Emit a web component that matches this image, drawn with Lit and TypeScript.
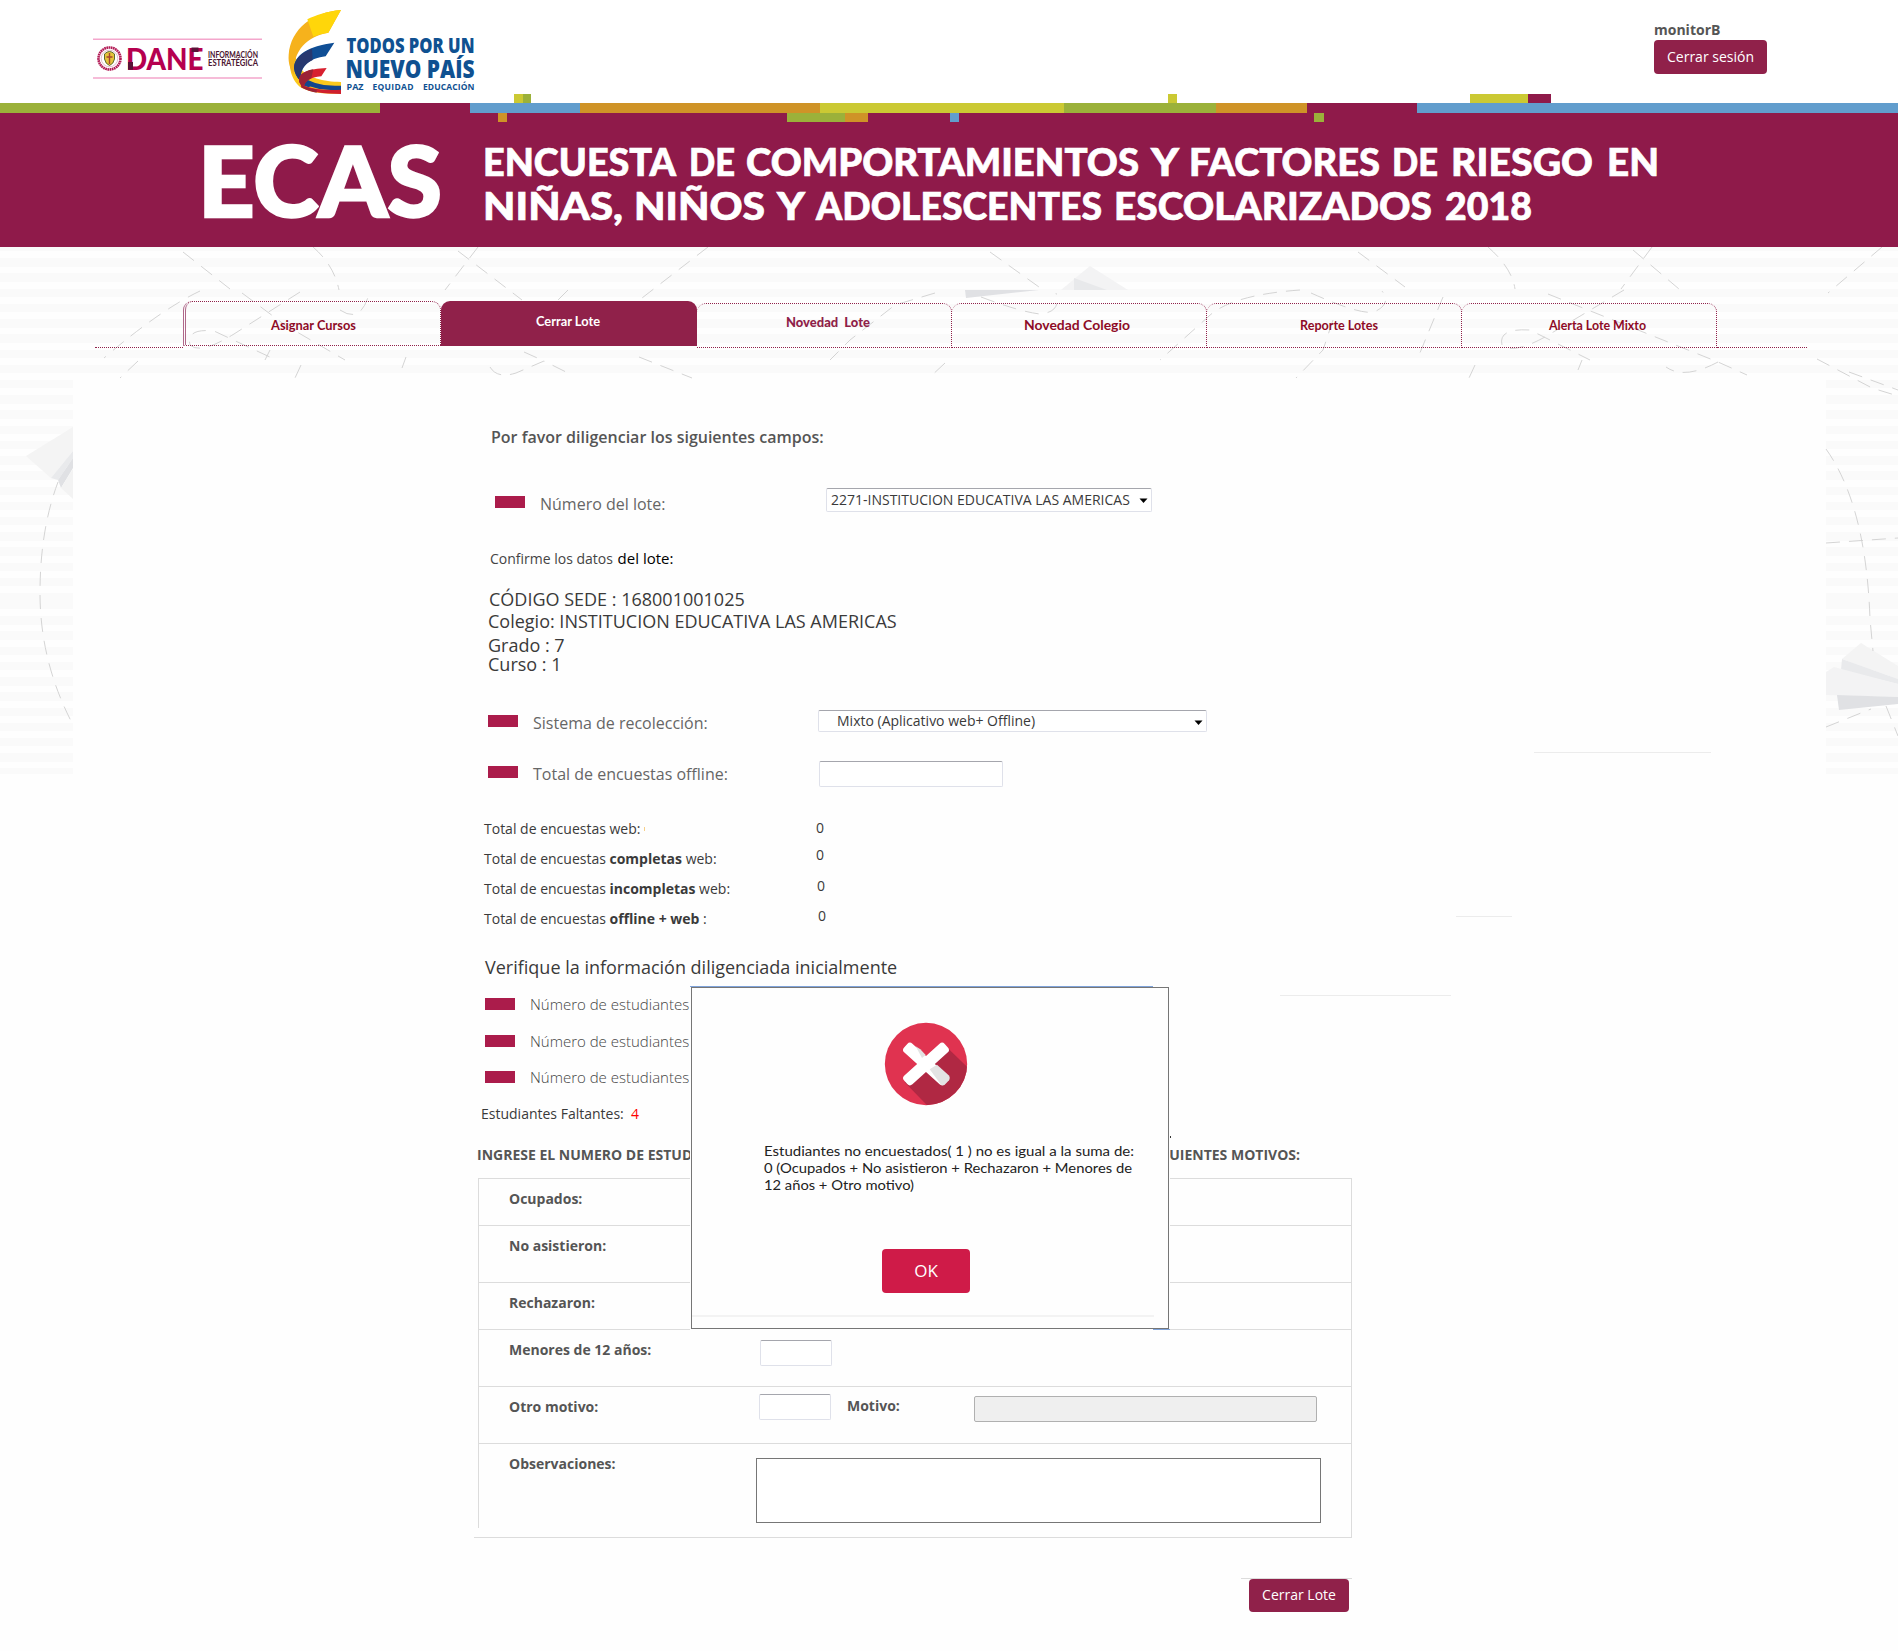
import { LitElement, html, svg, css } from "lit";
import { customElement } from "lit/decorators.js";

/* Colour blocks of the band above the banner: x, y, width, height, fill */
const STRIP: [number, number, number, number, string][] = [
  [0, 9, 380, 10, "#9bb13a"], [380, 9, 90, 10, "#8f1a4a"], [470, 9, 110, 10, "#619dcd"],
  [580, 9, 240, 10, "#cf9327"], [820, 9, 244, 10, "#cbc933"], [1064, 9, 152, 10, "#9bb13a"],
  [1216, 9, 91, 10, "#cf9327"], [1307, 9, 110, 10, "#8f1a4a"], [1417, 9, 481, 10, "#619dcd"],
  [514, 0, 9, 9, "#cbc933"], [523, 0, 8, 9, "#9bb13a"], [1168, 0, 9, 9, "#cbc933"],
  [1470, 0, 58, 9, "#cbc933"], [1528, 0, 23, 9, "#8f1a4a"],
  [498, 19, 9, 9, "#cf9327"], [787, 19, 58, 9, "#9bb13a"], [845, 19, 23, 9, "#cf9327"],
  [950, 19, 9, 9, "#619dcd"], [1314, 19, 10, 9, "#9bb13a"],
];

/* Banner title, one entry per word: left edge, right edge, baseline, word */
const TITLE: [number, number, number, string][] = [
  [486, 675, 175.5, "ENCUESTA"], [692, 734, 175.5, "DE"], [747, 1138, 175.5, "COMPORTAMIENTOS"],
  [1152, 1178, 175.5, "Y"], [1192, 1379, 175.5, "FACTORES"], [1395, 1437, 175.5, "DE"],
  [1454, 1592, 175.5, "RIESGO"], [1610, 1656, 175.5, "EN"],
  [486, 622, 219.5, "NIÑAS,"], [637, 764, 219.5, "NIÑOS"], [778, 804, 219.5, "Y"],
  [817, 1101, 219.5, "ADOLESCENTES"], [1117, 1431, 219.5, "ESCOLARIZADOS"], [1446, 1531, 219.5, "2018"],
];

/* Dashed flight trails of the paper planes */
const TRAILS = [
  "M183 252 L230 289", "M313 247 Q334 265 339 290", "M458 251 L522 300", "M478 247 L445 290",
  "M708 247 L642 298", "M200 291 Q160 310 104 358", "M242 293 L285 325 L345 360",
  "M300 292 L234 334 Q200 355 190 345 Q186 328 214 331 L272 358", "M340 310 Q362 325 370 290",
  "M138 361 L120 378", "M301 365 L295 378", "M270 350 L265 360", "M406 357 L402 368",
  "M490 367 Q497 379 516 373 L544 361 L572 375", "M524 352 L544 361", "M639 357 L692 378",
  "M568 290 L558 300", "M935 293 L895 305 L850 340 L830 360", "M945 363 L929 378",
  "M990 252 L1039 287", "M1358 252 L1405 287", "M1488 247 Q1512 268 1515 289",
  "M1633 250 L1679 289", "M1652 247 L1621 289", "M1882 247 L1828 293",
  "M981 297 Q1021 312 1040 314 Q1062 312 1056 293", "M1311 293 Q1360 315 1374 312 Q1392 304 1382 291",
  "M1300 290 Q1230 295 1208 317 L1160 360", "M1443 297 L1417 360", "M1333 320 L1323 350 L1296 378",
  "M1548 294 L1718 362 L1747 375", "M1624 290 L1545 337 Q1512 355 1502 345 Q1498 328 1530 330 L1590 360",
  "M1718 362 Q1684 380 1666 367", "M1475 365 L1469 378", "M1582 360 L1578 370", "M1817 359 L1872 388 L1898 396",
  "M1849 372 L1898 390", "M1826 449 Q1866 505 1870 619 L1873 651", "M1826 543 L1898 538",
  "M1826 727 L1871 709", "M1886 706 L1898 736",
  "M58 482 Q40 530 40 593 Q40 660 71 721",
];

/* Paper plane facets */
const FACETS: [string, string][] = [
  ["26,456 73,427 73,451 51,478", "#f4f4f4"], ["51,478 73,451 73,458 58,480", "#e9eaec"],
  ["58,480 73,458 73,468 61,488", "#e0e1e4"], ["61,488 73,469 73,499", "#f3f3f3"],
  ["1090,266 1128,290 1061,290", "#f3f3f4"], ["1074,278 1074,290 1107,290", "#e8e9eb"],
  ["965,290 1039,290 966,298", "#e0e1e4"],
  ["1861,643 1898,666 1898,679 1842,659", "#f4f4f4"], ["1842,659 1898,679 1898,684 1841,670", "#e9eaec"],
  ["1834,667 1898,684 1898,697 1826,695 1826,672", "#f3f3f4"], ["1837,695 1898,697 1898,704 1839,710", "#e0e1e4"],
];

interface Tab { label: string; cls: string; w: number; x: number; y: number; fill: string; weight: number }
const TABS: Tab[] = [
  { label: "Asignar Cursos", cls: "tab first", w: 85, x: 85, y: 28, fill: "#8e0a26", weight: 700 },
  { label: "Cerrar Lote", cls: "tab active", w: 64, x: 94, y: 24, fill: "#ffffff", weight: 700 },
  { label: "Novedad  Lote", cls: "tab", w: 84, x: 89, y: 23, fill: "#8f1f49", weight: 900 },
  { label: "Novedad Colegio", cls: "tab", w: 106, x: 72, y: 26, fill: "#8e0a26", weight: 700 },
  { label: "Reporte Lotes", cls: "tab", w: 78, x: 93, y: 26, fill: "#8e0a26", weight: 700 },
  { label: "Alerta Lote Mixto", cls: "tab", w: 97, x: 87, y: 26, fill: "#8e0a26", weight: 700 },
];

@customElement("app-root")
export class AppRoot extends LitElement {
  static styles = css`
    :host { display: block; width: 1898px; height: 1651px; overflow: hidden; position: relative;
      background: #fefefe; font-family: "Open Sans", "Liberation Sans", sans-serif; color: #3a3a3a; }
    * { box-sizing: border-box; }
    svg { display: block; }
    svg text { font-family: Lato, "Liberation Sans", sans-serif; white-space: pre; }
    svg .os text { font-family: "Open Sans", "Liberation Sans", sans-serif; }
    .backdrop { position: absolute; left: 0; top: 243px; width: 1898px; height: 531px; }
    .lines { height: 357.5px; background: repeating-linear-gradient(#fafafa 0 8.5px, #fefefe 8.5px 15.22px); }
    .lines.low { height: 173.5px; }
    .trails { position: absolute; left: 0; top: 0; }
    header { position: relative; height: 247px; }
    .top { height: 103px; background: #fff; display: flex; justify-content: space-between; padding-right: 131px; }
    .user { display: flex; flex-direction: column; width: 113px; padding-top: 19px; font-size: 14px; }
    .user b { line-height: 21px; color: #555; }
    .btn { display: block; border: 0; margin: 0; padding: 0; font: 14px "Open Sans", sans-serif; color: #fff;
      background: #90214a; border-radius: 4px; text-align: center; }
    .logout { width: 113px; height: 34px; padding-bottom: 2px; }
    .banner { background: #8f1a4a; height: 144px; }
    .strip { position: absolute; left: 0; top: 94px; }
    nav { position: relative; height: 132px; padding: 54px 0 0 95px; display: flex; align-items: flex-start; }
    .edge { height: 47px; border-bottom: 1px dotted #90214a; }
    .edge.l { width: 88px; } .edge.r { width: 90px; }
    .tab { width: 255px; height: 45px; margin-top: 2px; border: 1px dotted #90214a; border-left-width: 0;
      border-radius: 9px 9px 0 0; }
    .tab.first { width: 258px; height: 45px; margin-top: 0; border-left: 3px double #b0688a; }
    .tab.active { width: 256px; margin-top: 0; background: #90214a; border-left-width: 1px; }
    main { position: relative; height: 1272px; padding: 46px 0 0 475px; margin: 0 72px 0 0; display: flex; flex-direction: column; }
    .panel { position: absolute; left: 73px; top: 379px; width: 1753px; height: 400px; background: #fefefe; }
    h1 { margin: 0 0 0 16px; font-size: 16px; line-height: 24px; font-weight: 600; color: #555; }
    .row { display: flex; align-items: flex-start; }
    .mark { width: 30px; height: 12px; background: #ab1c4b; margin-right: 15px; flex: none; }
    .lab { font-size: 16px; line-height: 24px; color: #666; white-space: nowrap; }
    .box { border: 1px solid #dfe1ea; border-top-color: #a5a6ad; border-radius: 2px; background: #fff; flex: none;
      font-size: 14px; white-space: nowrap; display: flex; justify-content: space-between; }
    .r-lote { height: 28px; margin-top: 39px; padding-left: 20px; }
    .r-lote .mark { margin-top: 8px; } .r-lote .lab { margin-top: 4px; width: 286px; }
    .s1 { width: 326px; height: 24px; padding: 0 3px 0 4px; line-height: 21px; }
    .confirm { margin: 32px 0 0 15px; font-size: 14px; line-height: 20px; color: #444; height: 20px; white-space: pre; }
    .confirm span { color: #000; font-size: 15px; padding-left: 1px; }
    .data { margin: 21px 0 0 13px; font-size: 18px; line-height: 20px; height: 121px; }
    .data p { margin: 0; }
    .data p:first-child { padding-left: 1px; }
    .data .b { margin-top: 2px; } .data .c { margin-top: 4px; } .data .d { margin-top: -1px; }
    .r-sys { padding-left: 13px; height: 51px; }
    .r-sys .mark { margin-top: 5px; } .r-sys .lab { margin-top: 1px; width: 285px; }
    .s2 { width: 389px; height: 22px; padding: 0 3px 0 18px; line-height: 20px; }
    .arrow { margin-top: 9px; }
    .i1 { width: 184px; height: 26px; margin-left: 1px; }
    .totals { display: grid; grid-template-columns: 332px 40px; grid-auto-rows: 30px; padding-left: 9px; margin-top: 2px;
      font-size: 14px; line-height: 30px; color: #3a3a3a; }
    .totals .u1 { margin-top: -1px; } .totals .u2 { margin-top: -4px; } .totals .u3 { margin: -3px 0 0 1px; } .totals .u4 { margin: -3px 0 0 2px; }
    .check { margin: 21px 0 0 10px; font-size: 18px; line-height: 24px; }
    .students { padding-left: 10px; margin-top: 13px; }
    .students .row { height: 36.5px; }
    .students .mark { margin-top: 6px; }
    .students .lab { font-size: 15px; font-weight: 300; color: #444; }
    .missing { margin: 2px 0 0 6px; font-size: 14px; line-height: 20px; white-space: pre; }
    .missing span { color: #f00; }
    .ask { margin: 21px 0 0 2px; width: 823px; display: flex; justify-content: space-between; font-size: 14px; line-height: 20px;
      font-weight: 700; color: #555; }
    .table { width: 874px; margin: 13px 0 0 3px; border: 1px solid #dcdcdc; border-left: 0; border-bottom: 0; position: relative; }
    .tr { display: flex; align-items: flex-start; padding-left: 30px; border-bottom: 1px solid #dcdcdc; border-left: 1px solid #dcdcdc;
      font-size: 14px; line-height: 20px; font-weight: 700; color: #555; margin-left: 0; }
    .tr label { width: 249px; padding-top: 10px; }
    .h47 { height: 47px; } .h57 { height: 57px; }
    .tr.last { height: 84px; border-bottom: 0; }
    .foot { height: 10px; margin-left: -4px; border-bottom: 1px solid #dcdcdc; }
    .small { width: 72px; height: 26px; }
    .m1 { margin: 10px 0 0 2px; } .m2 { margin: 7px 0 0 1px; }
    .tr .motivo { width: 127px; margin-left: 16px; padding-top: 9px; }
    .disabled { width: 343px; height: 26px; margin-top: 9px; background: #efefef; border: 1px solid #b0b0b0; border-radius: 2px; }
    .area { width: 565px; height: 65px; margin: 14px 0 0 -2px; border: 1px solid #767676; background: #fff; }
    .submit { margin: 40px 0 0 766px; width: 111px; border-top: 1px solid #dcdcdc; padding-left: 8px; }
    .submit .btn { width: 100px; height: 33px; padding-bottom: 2px; }
    .modal { position: absolute; left: 690px; top: 986px; width: 480px; height: 344px; background: #fefefe; }
    .frame { margin: 1px; width: 478px; height: 342px; border: 1px solid #767676; display: flex; flex-direction: column;
      align-items: center; }
    .frame .icon { margin: 34px 9px 0 0; }
    .frame .msg { margin: 33px 0 0 39px; }
    .ok { width: 88px; height: 44px; margin: 56px 8px 0 0; padding-bottom: 2px; background: #cf1b48; font-size: 17px; font-weight: 500; }
    .rule { width: 462px; height: 2px; margin: 22px 14px 0 0; background: #f3f3f3; }
    .blue { position: absolute; height: 1px; background: #7fa3da; }
    .blue.t { left: 0; top: 0; width: 463px; } .blue.b { right: 0; bottom: 0; width: 17px; }
    .stray { position: absolute; height: 1px; background: #ececec; }
    .sa { left: 1534px; top: 752px; width: 177px; } .sb { left: 1456px; top: 916px; width: 56px; }
    .sc { left: 1280px; top: 995px; width: 171px; }
    .sd { left: 1170px; top: 1136px; width: 1px; height: 2px; background: #333; }
    .se { left: 644px; top: 827px; width: 1px; height: 4px; background: #f7d08a; }
  `;

  private arrow() {
    return html`<svg class="arrow" width="9" height="6" viewBox="0 0 9 6"><path d="M0.5 0.5H8.5L4.5 5Z" fill="#000"/></svg>`;
  }

  private logos() {
    return html`<svg width="500" height="103" viewBox="0 0 500 103">
      <path d="M93 39.200H262M93 78H262" stroke="#f4a6cc" stroke-width="1.400"/>
      <circle cx="109.500" cy="58.500" r="11" fill="#fff" stroke="#b21a55" stroke-width="2.600" stroke-dasharray="1.700 .5"/>
      <circle cx="109.500" cy="58.500" r="8.300" fill="none" stroke="#d4a3b5" stroke-width=".7"/>
      <path d="M104.500 54q5-5 10 0v5q-1 5-5 6.500q-4-1.500-5-6.500z" fill="#e6c33b" stroke="#5c6b2d" stroke-width="1"/>
      <path d="M106.500 57h6M109.500 53v11" stroke="#a5452f" stroke-width="1.400"/>
      <text x="126" y="69.700" font-size="31" font-weight="900" textLength="77.500" lengthAdjust="spacingAndGlyphs" fill="#b5004f">DANE</text>
      <path d="M128 62h5v7.700h-5z" fill="#5b1238"/><path d="M191.500 47.500h7v4.500h-7z" fill="#5b1238"/>
      <g fill="#4b1430" font-size="8.800" font-weight="700">
        <text x="208" y="57.600" textLength="50" lengthAdjust="spacingAndGlyphs">INFORMACIÓN</text>
        <text x="208" y="65.700" textLength="50" lengthAdjust="spacingAndGlyphs">ESTRATÉGICA</text>
      </g>
      <g transform="translate(270 0) scale(.33333)">
        <path d="M66 150C50 200 66 245 95 264C130 281 180 282 213 281V246C160 246 110 232 92 205Z" fill="#fbc81c"/>
        <path d="M213 30C130 36 62 85 56 165C54 190 62 210 72 226C66 150 115 108 175 98Z" fill="#f6b21c"/>
        <path d="M213 30C170 34 135 46 112 58L130 110Q150 101 175 98Z" fill="#ffd60a"/>
        <path d="M193 128C115 138 72 165 72 205Q75 228 92 244C88 200 120 174 167 169Z" fill="#0f4e95"/>
        <path d="M126 146C90 160 72 180 72 205Q75 228 92 244C88 215 100 192 128 180Z" fill="#27386f"/>
        <path d="M92 225Q135 262 213 257V271Q140 273 96 250Z" fill="#12468d"/>
        <path d="M86 232Q105 246 128 254L116 262Q100 258 90 250Z" fill="#12468d"/>
        <path d="M170 204C115 206 84 218 88 246Q92 258 102 264C100 245 120 232 154 229Z" fill="#d8202f"/>
        <path d="M130 208C98 214 84 226 88 246Q92 258 102 264Q100 246 124 235Z" fill="#9c2335"/>
        <path d="M94 254Q140 273 213 269V282Q130 282 94 262Z" fill="#cf1f2d"/>
        <path d="M94 254Q110 264 140 268V278Q112 274 94 262Z" fill="#9c2335"/>
      </g>
      <g class="os" fill="#0f5191">
        <text x="346.500" y="53" font-size="20.500" font-weight="800" textLength="128" lengthAdjust="spacingAndGlyphs">TODOS POR UN</text>
        <text x="345.500" y="77.700" font-size="25" font-weight="800" textLength="129" lengthAdjust="spacingAndGlyphs">NUEVO PAÍS</text>
        <text x="346.500" y="90.300" font-size="8.500" font-weight="700" textLength="17" lengthAdjust="spacingAndGlyphs">PAZ</text>
        <text x="372.500" y="90.300" font-size="8.500" font-weight="700" textLength="41">EQUIDAD</text>
        <text x="423" y="90.300" font-size="8.500" font-weight="700" textLength="51.500">EDUCACIÓN</text>
      </g>
    </svg>`;
  }

  render() {
    return html`
      <div class="backdrop"><div class="lines"></div><div class="lines low"></div></div>
      <div class="panel"></div>
      <svg class="trails" width="1898" height="780" viewBox="0 0 1898 780">
        ${FACETS.map(([p, f]) => svg`<polygon points=${p} fill=${f}></polygon>`)}
        ${TRAILS.map((d) => svg`<path d=${d} fill="none" stroke="#cfcfcf" stroke-width="0.9" stroke-dasharray="14 9"></path>`)}
      </svg>
      <header>
        <div class="top">
          ${this.logos()}
          <div class="user"><b>monitorB</b><button class="btn logout">Cerrar sesión</button></div>
        </div>
        <div class="banner">
          <svg width="1898" height="144" viewBox="0 103 1898 144" fill="#fff" stroke="#fff">
            <text x="198" y="217" font-size="98" font-weight="900" stroke-width="2.500" textLength="244" lengthAdjust="spacingAndGlyphs">ECAS</text>
            ${TITLE.map(([a, b, y, word]) => {
              const lead = /^[ENFRD]/.test(word) ? 3 : 1;
              const tail = /N$/.test(word) ? 3 : 1;
              return svg`<text x=${a - lead} y=${y} font-size="38.5" font-weight="900" stroke-width="0.7"
                textLength=${b - a + lead + tail} lengthAdjust="spacingAndGlyphs">${word}</text>`;
            })}
          </svg>
        </div>
        <svg class="strip" width="1898" height="28" viewBox="0 0 1898 28">
          ${STRIP.map(([x, y, w, h, f]) => svg`<rect x=${x} y=${y} width=${w} height=${h} fill=${f}></rect>`)}
        </svg>
      </header>
      <nav>
        <div class="edge l"></div>
        ${TABS.map((t) => html`<div class=${t.cls}>
          <svg width="250" height="42" viewBox="0 0 250 42">
            <text x=${t.x} y=${t.y} font-size="13" font-weight=${t.weight} fill=${t.fill} textLength=${t.w} lengthAdjust="spacingAndGlyphs">${t.label}</text>
          </svg></div>`)}
        <div class="edge r"></div>
      </nav>
      <main>
        <h1>Por favor diligenciar los siguientes campos:</h1>
        <div class="row r-lote">
          <i class="mark"></i><span class="lab">Número del lote:</span>
          <div class="box s1"><span>2271-INSTITUCION EDUCATIVA LAS AMERICAS</span>${this.arrow()}</div>
        </div>
        <div class="confirm">Confirme los datos <span>del lote:</span></div>
        <div class="data">
          <p>CÓDIGO SEDE : 168001001025</p>
          <p class="b">Colegio: INSTITUCION EDUCATIVA LAS AMERICAS</p>
          <p class="c">Grado : 7</p>
          <p class="d">Curso : 1</p>
        </div>
        <div class="row r-sys">
          <i class="mark"></i><span class="lab">Sistema de recolección:</span>
          <div class="box s2"><span>Mixto (Aplicativo web+ Offline)</span>${this.arrow()}</div>
        </div>
        <div class="row r-sys">
          <i class="mark"></i><span class="lab">Total de encuestas offline:</span>
          <div class="box i1"></div>
        </div>
        <div class="totals">
          <span>Total de encuestas web:</span><span class="u1">0</span>
          <span>Total de encuestas <b>completas</b> web:</span><span class="u2">0</span>
          <span>Total de encuestas <b>incompletas</b> web:</span><span class="u3">0</span>
          <span>Total de encuestas <b>offline + web</b> :</span><span class="u4">0</span>
        </div>
        <div class="check">Verifique la información diligenciada inicialmente</div>
        <div class="students">
          ${[0, 1, 2].map(() => html`<div class="row"><i class="mark"></i><span class="lab">Número de estudiantes</span></div>`)}
        </div>
        <div class="missing">Estudiantes Faltantes:  <span>4</span></div>
        <div class="ask"><span>INGRESE EL NUMERO DE ESTUD</span><span>UIENTES MOTIVOS:</span></div>
        <div class="table">
          <div class="tr h47"><label>Ocupados:</label></div>
          <div class="tr h57"><label>No asistieron:</label></div>
          <div class="tr h47"><label>Rechazaron:</label></div>
          <div class="tr h57"><label>Menores de 12 años:</label><div class="box small m1"></div></div>
          <div class="tr h57"><label>Otro motivo:</label><div class="box small m2"></div>
            <label class="motivo">Motivo:</label><div class="disabled"></div></div>
          <div class="tr last"><label>Observaciones:</label><div class="area"></div></div>
          <div class="foot"></div>
        </div>
        <div class="submit"><button class="btn">Cerrar Lote</button></div>
      </main>
      <i class="stray sa"></i><i class="stray sb"></i><i class="stray sc"></i><i class="stray se"></i>
      <div class="modal">
        <div class="frame">
          <svg class="icon" width="84" height="84" viewBox="131 64 252 252">
            <defs><clipPath id="disc"><circle cx="257" cy="190" r="123.500"/></clipPath></defs>
            <circle cx="257" cy="190" r="123.500" fill="#e03350"/>
            <path clip-path="url(#disc)" d="M193 245L322 142L400 218V330H276Z" fill="#b02843"/>
            <rect x="175" y="172" width="164" height="36" rx="11" transform="rotate(42 257 190)" fill="#fff"/>
            <path d="M226 137L240 146L256 163L245 172Z" fill="#e3e3e3"/>
            <path d="M268 206L290 192L325 224Q331 231 326 239L313 252Q306 257 300 249Z" fill="#e3e3e3"/>
            <rect x="175" y="172" width="164" height="36" rx="11" transform="rotate(-42 257 190)" fill="#fff"/>
          </svg>
          <svg class="msg" width="374" height="54" viewBox="0 0 374 54" fill="#222">
            <text x="1" y="17" font-size="13.300" textLength="370" lengthAdjust="spacingAndGlyphs">Estudiantes no encuestados( 1 ) no es igual a la suma de:</text>
            <text x="1" y="34" font-size="13.300" textLength="368" lengthAdjust="spacingAndGlyphs">0 (Ocupados + No asistieron + Rechazaron + Menores de</text>
            <text x="1" y="51" font-size="13.300" textLength="150" lengthAdjust="spacingAndGlyphs">12 años + Otro motivo)</text>
          </svg>
          <button class="btn ok">OK</button>
          <div class="rule"></div>
        </div>
        <i class="blue t"></i><i class="blue b"></i>
      </div>
      <i class="stray sd"></i>
    `;
  }
}
